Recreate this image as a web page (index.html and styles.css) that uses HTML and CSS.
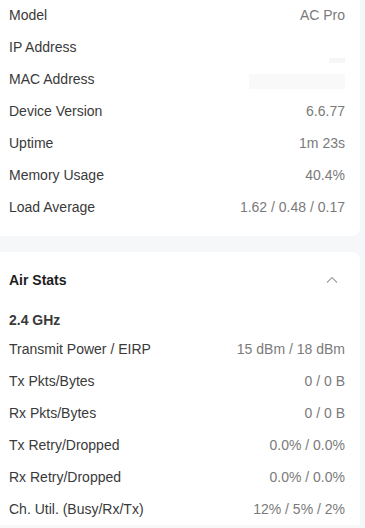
FILE: index.html
```html
<!DOCTYPE html>
<html>
<head>
<meta charset="utf-8">
<link rel="stylesheet" href="styles.css">
</head>
<body>
<div class="page">
  <section class="card card-top">
    <div class="row"><span class="label">Model</span><span class="value">AC Pro</span></div>
    <div class="row"><span class="label">IP Address</span><span class="value"><span class="blur-ip"></span></span></div>
    <div class="row"><span class="label">MAC Address</span><span class="value"><span class="blur-mac"></span></span></div>
    <div class="row"><span class="label">Device Version</span><span class="value">6.6.77</span></div>
    <div class="row"><span class="label">Uptime</span><span class="value">1m 23s</span></div>
    <div class="row"><span class="label">Memory Usage</span><span class="value">40.4%</span></div>
    <div class="row"><span class="label">Load Average</span><span class="value">1.62 / 0.48 / 0.17</span></div>
  </section>
  <section class="card card-air">
    <div class="card-header">
      <span class="title">Air Stats</span>
      <svg class="chevron" width="12" height="8" viewBox="0 0 12 8"><path d="M1 6.5 L6 1.5 L11 6.5" fill="none" stroke="#a0a0a0" stroke-width="1.1"/></svg>
    </div>
    <div class="subhead">2.4 GHz</div>
    <div class="row"><span class="label">Transmit Power / EIRP</span><span class="value">15 dBm / 18 dBm</span></div>
    <div class="row"><span class="label">Tx Pkts/Bytes</span><span class="value">0 / 0 B</span></div>
    <div class="row"><span class="label">Rx Pkts/Bytes</span><span class="value">0 / 0 B</span></div>
    <div class="row"><span class="label">Tx Retry/Dropped</span><span class="value">0.0% / 0.0%</span></div>
    <div class="row"><span class="label">Rx Retry/Dropped</span><span class="value">0.0% / 0.0%</span></div>
    <div class="row"><span class="label">Ch. Util. (Busy/Rx/Tx)</span><span class="value">12% / 5% / 2%</span></div>
  </section>
</div>
</body>
</html>
```

FILE: styles.css
```css
html, body {
  margin: 0;
  padding: 0;
  background: #f6f7f8;
  font-family: "Liberation Sans", Arial, sans-serif;
  font-size: 14px;
}
.page {
  width: 360px;
  display: flex;
  flex-direction: column;
  gap: 16px;
}
.card {
  background: #ffffff;
}
.card-top {
  margin-top: -1px;
  padding: 0 15px 13px 9px;
  border-radius: 0 0 8px 0;
}
.card-air {
  padding: 0 15px 0 9px;
  border-radius: 0 8px 0 0;
}
.row {
  height: 32px;
  display: flex;
  align-items: center;
  justify-content: space-between;
}
.label {
  color: #3a3a3a;
}
.value {
  color: #7a7a7a;
  display: flex;
  align-items: center;
}
.blur-ip {
  display: block;
  width: 16px;
  height: 5px;
  margin-top: 26px;
  background: #f6f6f6;
}
.blur-mac {
  display: block;
  width: 96px;
  height: 15px;
  margin-top: 4px;
  background: #f9f9f9;
}
.card-header {
  height: 55px;
  display: flex;
  align-items: center;
  justify-content: space-between;
}
.title {
  font-weight: bold;
  color: #1e1e1e;
}
.chevron {
  margin-right: 7px;
}
.subhead {
  height: 26px;
  display: flex;
  align-items: center;
  font-weight: bold;
  color: #3a3a3a;
}
```
